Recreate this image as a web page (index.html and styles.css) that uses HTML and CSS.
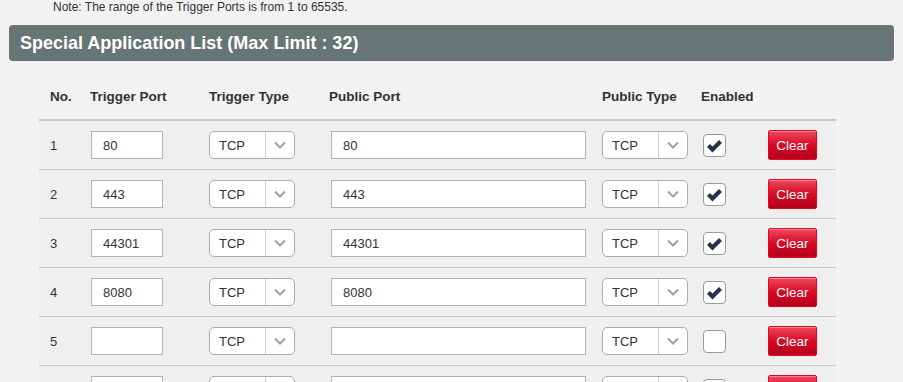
FILE: index.html
```html
<!DOCTYPE html>
<html>
<head>
  <title>Special Application</title>
  <link rel="stylesheet" href="styles.css">
</head>
<body>
  <p class="note">Note: The range of the Trigger Ports is from 1 to 65535.</p>

  <div class="panel-title">Special Application List (Max Limit : 32)</div>

  <div class="app-table">
    <div class="row head">
      <div class="cell no">No.</div>
      <div class="cell">Trigger Port</div>
      <div class="cell">Trigger Type</div>
      <div class="cell">Public Port</div>
      <div class="cell">Public Type</div>
      <div class="cell">Enabled</div>
      <div class="cell"></div>
    </div>

    <div class="row">
      <div class="cell no">1</div>
      <div class="cell"><input class="port" type="text" value="80"></div>
      <div class="cell"><div class="select"><span class="val">TCP</span><span class="arrow"><svg width="12" height="8" viewBox="0 0 12 8"><polyline points="1,1.5 6,6.5 11,1.5" fill="none" stroke="#a0a0a0" stroke-width="2"/></svg></span></div></div>
      <div class="cell"><input class="port wide" type="text" value="80"></div>
      <div class="cell"><div class="select"><span class="val">TCP</span><span class="arrow"><svg width="12" height="8" viewBox="0 0 12 8"><polyline points="1,1.5 6,6.5 11,1.5" fill="none" stroke="#a0a0a0" stroke-width="2"/></svg></span></div></div>
      <div class="cell"><span class="check"><svg width="21" height="21" viewBox="0 0 21 21"><polyline points="4.5,10.5 8.5,14.5 16.5,6.5" fill="none" stroke="#26304f" stroke-width="4.2"/></svg></span></div>
      <div class="cell"><button class="clear">Clear</button></div>
    </div>

    <div class="row">
      <div class="cell no">2</div>
      <div class="cell"><input class="port" type="text" value="443"></div>
      <div class="cell"><div class="select"><span class="val">TCP</span><span class="arrow"><svg width="12" height="8" viewBox="0 0 12 8"><polyline points="1,1.5 6,6.5 11,1.5" fill="none" stroke="#a0a0a0" stroke-width="2"/></svg></span></div></div>
      <div class="cell"><input class="port wide" type="text" value="443"></div>
      <div class="cell"><div class="select"><span class="val">TCP</span><span class="arrow"><svg width="12" height="8" viewBox="0 0 12 8"><polyline points="1,1.5 6,6.5 11,1.5" fill="none" stroke="#a0a0a0" stroke-width="2"/></svg></span></div></div>
      <div class="cell"><span class="check"><svg width="21" height="21" viewBox="0 0 21 21"><polyline points="4.5,10.5 8.5,14.5 16.5,6.5" fill="none" stroke="#26304f" stroke-width="4.2"/></svg></span></div>
      <div class="cell"><button class="clear">Clear</button></div>
    </div>

    <div class="row">
      <div class="cell no">3</div>
      <div class="cell"><input class="port" type="text" value="44301"></div>
      <div class="cell"><div class="select"><span class="val">TCP</span><span class="arrow"><svg width="12" height="8" viewBox="0 0 12 8"><polyline points="1,1.5 6,6.5 11,1.5" fill="none" stroke="#a0a0a0" stroke-width="2"/></svg></span></div></div>
      <div class="cell"><input class="port wide" type="text" value="44301"></div>
      <div class="cell"><div class="select"><span class="val">TCP</span><span class="arrow"><svg width="12" height="8" viewBox="0 0 12 8"><polyline points="1,1.5 6,6.5 11,1.5" fill="none" stroke="#a0a0a0" stroke-width="2"/></svg></span></div></div>
      <div class="cell"><span class="check"><svg width="21" height="21" viewBox="0 0 21 21"><polyline points="4.5,10.5 8.5,14.5 16.5,6.5" fill="none" stroke="#26304f" stroke-width="4.2"/></svg></span></div>
      <div class="cell"><button class="clear">Clear</button></div>
    </div>

    <div class="row">
      <div class="cell no">4</div>
      <div class="cell"><input class="port" type="text" value="8080"></div>
      <div class="cell"><div class="select"><span class="val">TCP</span><span class="arrow"><svg width="12" height="8" viewBox="0 0 12 8"><polyline points="1,1.5 6,6.5 11,1.5" fill="none" stroke="#a0a0a0" stroke-width="2"/></svg></span></div></div>
      <div class="cell"><input class="port wide" type="text" value="8080"></div>
      <div class="cell"><div class="select"><span class="val">TCP</span><span class="arrow"><svg width="12" height="8" viewBox="0 0 12 8"><polyline points="1,1.5 6,6.5 11,1.5" fill="none" stroke="#a0a0a0" stroke-width="2"/></svg></span></div></div>
      <div class="cell"><span class="check"><svg width="21" height="21" viewBox="0 0 21 21"><polyline points="4.5,10.5 8.5,14.5 16.5,6.5" fill="none" stroke="#26304f" stroke-width="4.2"/></svg></span></div>
      <div class="cell"><button class="clear">Clear</button></div>
    </div>

    <div class="row">
      <div class="cell no">5</div>
      <div class="cell"><input class="port" type="text" value=""></div>
      <div class="cell"><div class="select"><span class="val">TCP</span><span class="arrow"><svg width="12" height="8" viewBox="0 0 12 8"><polyline points="1,1.5 6,6.5 11,1.5" fill="none" stroke="#a0a0a0" stroke-width="2"/></svg></span></div></div>
      <div class="cell"><input class="port wide" type="text" value=""></div>
      <div class="cell"><div class="select"><span class="val">TCP</span><span class="arrow"><svg width="12" height="8" viewBox="0 0 12 8"><polyline points="1,1.5 6,6.5 11,1.5" fill="none" stroke="#a0a0a0" stroke-width="2"/></svg></span></div></div>
      <div class="cell"><span class="check"></span></div>
      <div class="cell"><button class="clear">Clear</button></div>
    </div>

    <div class="row">
      <div class="cell no">6</div>
      <div class="cell"><input class="port" type="text" value=""></div>
      <div class="cell"><div class="select"><span class="val">TCP</span><span class="arrow"><svg width="12" height="8" viewBox="0 0 12 8"><polyline points="1,1.5 6,6.5 11,1.5" fill="none" stroke="#a0a0a0" stroke-width="2"/></svg></span></div></div>
      <div class="cell"><input class="port wide" type="text" value=""></div>
      <div class="cell"><div class="select"><span class="val">TCP</span><span class="arrow"><svg width="12" height="8" viewBox="0 0 12 8"><polyline points="1,1.5 6,6.5 11,1.5" fill="none" stroke="#a0a0a0" stroke-width="2"/></svg></span></div></div>
      <div class="cell"><span class="check"></span></div>
      <div class="cell"><button class="clear">Clear</button></div>
    </div>
  </div>
</body>
</html>
```

FILE: styles.css
```css
* {
  margin: 0;
  padding: 0;
  box-sizing: border-box;
}

body {
  font-family: "Liberation Sans", Arial, sans-serif;
  background: #f2f2f2;
  color: #333;
  overflow: hidden;
}

.note {
  font-size: 12px;
  line-height: 14px;
  padding: 0 0 0 53px;
  color: #333;
}

.panel-title {
  margin: 11px 9px 0 9px;
  height: 36px;
  line-height: 36px;
  padding-left: 11px;
  background: #687575;
  color: #fff;
  font-size: 18px;
  font-weight: bold;
  border-radius: 4px;
}

.app-table {
  margin: 12px 0 0 39px;
  width: 797px;
  background: #efefef;
}

.row {
  display: grid;
  grid-template-columns: 51px 119px 120px 273px 99px 67px 68px;
  align-items: center;
  height: 49px;
  border-bottom: 1px solid #cacaca;
  font-size: 13px;
}

.row.head {
  height: 48px;
  border-bottom: 2px solid #cacaca;
  font-size: 13.5px;
  font-weight: bold;
  background: #f2f2f2;
}

.cell {
  display: flex;
  align-items: center;
}

.cell.no {
  padding-left: 11px;
}

.port {
  width: 72px;
  height: 28px;
  margin-left: 1px;
  border: 1px solid #b4b4b4;
  background: #fff;
  padding-left: 11px;
  font-family: inherit;
  font-size: 13px;
  color: #333;
}

.port.wide {
  width: 255px;
  margin-left: 2px;
}

.select {
  display: flex;
  width: 86px;
  height: 28px;
  border: 1px solid #adadad;
  border-radius: 5px;
  background: #fff;
}

.select .val {
  flex: 1;
  line-height: 28px;
  padding-left: 9px;
  font-size: 13px;
}

.select .arrow {
  width: 29px;
  border-left: 1px solid #d0d0d0;
  display: flex;
  align-items: center;
  justify-content: center;
}

.check {
  display: block;
  width: 23px;
  height: 23px;
  margin-left: 2px;
  border: 1px solid #9a9a9a;
  border-radius: 4px;
  background: #fff;
}

.check svg {
  display: block;
}

.clear {
  width: 49px;
  height: 30px;
  border: 1px solid #f0001e;
  border-radius: 2px;
  background: linear-gradient(#ec4a5e 0%, #d80a24 50%, #b3001a 100%);
  box-shadow: inset 0 1px 0 rgba(255, 255, 255, 0.35);
  color: #fff;
  font-family: inherit;
  font-size: 13.5px;
  cursor: pointer;
}
```
